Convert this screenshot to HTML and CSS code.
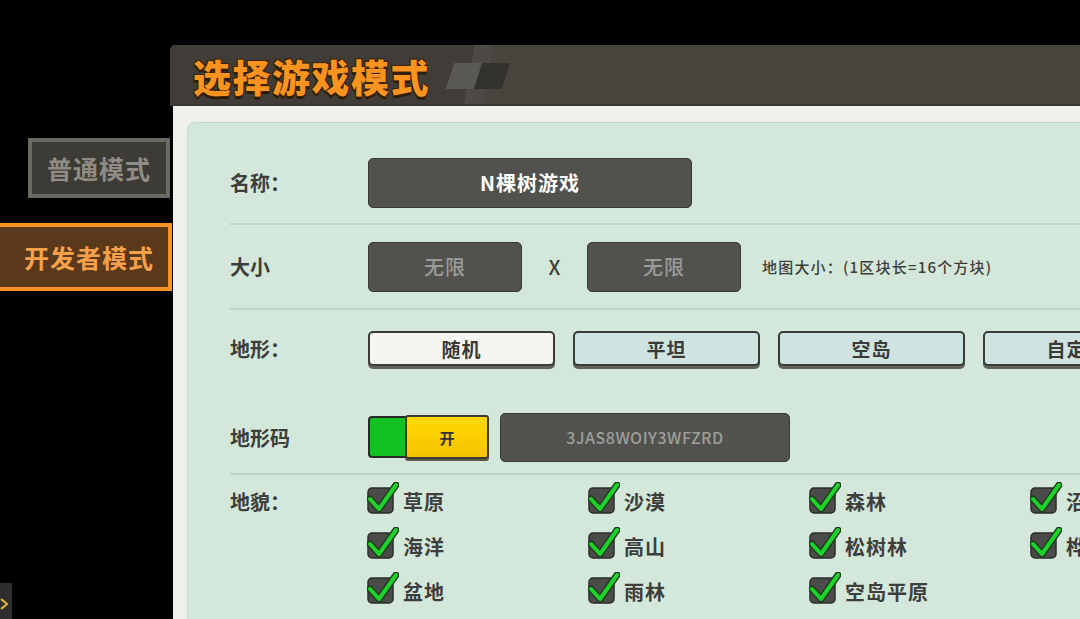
FILE: index.html
```html
<!DOCTYPE html>
<html lang="zh-CN">
<head>
<meta charset="utf-8">
<title>选择游戏模式</title>
<link rel="stylesheet" href="styles.css">
</head>
<body>
<div class="screen">
  <aside class="side">
    <div class="tab tab-normal">普通模式</div>
    <div class="tab tab-dev">开发者模式</div>
    <div class="side-more">
      <svg width="12" height="36" viewBox="0 0 12 36"><path d="M1 16 L7 21 L1 26" fill="none" stroke="#e2b82a" stroke-width="2.2" stroke-linejoin="round"/></svg>
    </div>
  </aside>
  <main class="panel">
    <header class="panel-head">
      <h1 class="title">选择游戏模式</h1>
      <span class="deco"><i class="deco-a"></i><i class="deco-b"></i></span>
    </header>
    <div class="frame">
      <div class="sheet">
        <div class="row row-name">
          <span class="label">名称：</span>
          <div class="field field-name">N棵树游戏</div>
        </div>
        <div class="row row-size">
          <span class="label">大小</span>
          <div class="field field-size">无限</div>
          <span class="times">X</span>
          <div class="field field-size">无限</div>
          <span class="note">地图大小：(1区块长=16个方块)</span>
        </div>
        <div class="row row-terrain">
          <span class="label label-btn">地形：</span>
          <div class="opt opt-on">随机</div>
          <div class="opt">平坦</div>
          <div class="opt">空岛</div>
          <div class="opt">自定义</div>
        </div>
        <div class="row row-code">
          <span class="label">地形码</span>
          <div class="toggle">
            <span class="toggle-track"></span>
            <span class="toggle-knob">开</span>
          </div>
          <div class="field field-code">3JAS8WOIY3WFZRD</div>
        </div>
        <div class="row row-biome">
          <span class="label label-check">地貌：</span>
          <div class="checks">
            <div class="check"><svg class="cb" viewBox="0 0 32 32"><rect x="1" y="6" width="25" height="25" rx="4" fill="#4b4b49" stroke="#2c2c2b" stroke-width="1.5"/><path d="M3 17 L12 27 L29 3" fill="none" stroke="#1d3d1d" stroke-width="7" stroke-linecap="round" stroke-linejoin="round"/><path d="M3 17 L12 27 L29 3" fill="none" stroke="#1fd22b" stroke-width="4" stroke-linecap="round" stroke-linejoin="round"/></svg><span>草原</span></div>
            <div class="check"><svg class="cb" viewBox="0 0 32 32"><rect x="1" y="6" width="25" height="25" rx="4" fill="#4b4b49" stroke="#2c2c2b" stroke-width="1.5"/><path d="M3 17 L12 27 L29 3" fill="none" stroke="#1d3d1d" stroke-width="7" stroke-linecap="round" stroke-linejoin="round"/><path d="M3 17 L12 27 L29 3" fill="none" stroke="#1fd22b" stroke-width="4" stroke-linecap="round" stroke-linejoin="round"/></svg><span>沙漠</span></div>
            <div class="check"><svg class="cb" viewBox="0 0 32 32"><rect x="1" y="6" width="25" height="25" rx="4" fill="#4b4b49" stroke="#2c2c2b" stroke-width="1.5"/><path d="M3 17 L12 27 L29 3" fill="none" stroke="#1d3d1d" stroke-width="7" stroke-linecap="round" stroke-linejoin="round"/><path d="M3 17 L12 27 L29 3" fill="none" stroke="#1fd22b" stroke-width="4" stroke-linecap="round" stroke-linejoin="round"/></svg><span>森林</span></div>
            <div class="check"><svg class="cb" viewBox="0 0 32 32"><rect x="1" y="6" width="25" height="25" rx="4" fill="#4b4b49" stroke="#2c2c2b" stroke-width="1.5"/><path d="M3 17 L12 27 L29 3" fill="none" stroke="#1d3d1d" stroke-width="7" stroke-linecap="round" stroke-linejoin="round"/><path d="M3 17 L12 27 L29 3" fill="none" stroke="#1fd22b" stroke-width="4" stroke-linecap="round" stroke-linejoin="round"/></svg><span>沼泽</span></div>
            <div class="check"><svg class="cb" viewBox="0 0 32 32"><rect x="1" y="6" width="25" height="25" rx="4" fill="#4b4b49" stroke="#2c2c2b" stroke-width="1.5"/><path d="M3 17 L12 27 L29 3" fill="none" stroke="#1d3d1d" stroke-width="7" stroke-linecap="round" stroke-linejoin="round"/><path d="M3 17 L12 27 L29 3" fill="none" stroke="#1fd22b" stroke-width="4" stroke-linecap="round" stroke-linejoin="round"/></svg><span>海洋</span></div>
            <div class="check"><svg class="cb" viewBox="0 0 32 32"><rect x="1" y="6" width="25" height="25" rx="4" fill="#4b4b49" stroke="#2c2c2b" stroke-width="1.5"/><path d="M3 17 L12 27 L29 3" fill="none" stroke="#1d3d1d" stroke-width="7" stroke-linecap="round" stroke-linejoin="round"/><path d="M3 17 L12 27 L29 3" fill="none" stroke="#1fd22b" stroke-width="4" stroke-linecap="round" stroke-linejoin="round"/></svg><span>高山</span></div>
            <div class="check"><svg class="cb" viewBox="0 0 32 32"><rect x="1" y="6" width="25" height="25" rx="4" fill="#4b4b49" stroke="#2c2c2b" stroke-width="1.5"/><path d="M3 17 L12 27 L29 3" fill="none" stroke="#1d3d1d" stroke-width="7" stroke-linecap="round" stroke-linejoin="round"/><path d="M3 17 L12 27 L29 3" fill="none" stroke="#1fd22b" stroke-width="4" stroke-linecap="round" stroke-linejoin="round"/></svg><span>松树林</span></div>
            <div class="check"><svg class="cb" viewBox="0 0 32 32"><rect x="1" y="6" width="25" height="25" rx="4" fill="#4b4b49" stroke="#2c2c2b" stroke-width="1.5"/><path d="M3 17 L12 27 L29 3" fill="none" stroke="#1d3d1d" stroke-width="7" stroke-linecap="round" stroke-linejoin="round"/><path d="M3 17 L12 27 L29 3" fill="none" stroke="#1fd22b" stroke-width="4" stroke-linecap="round" stroke-linejoin="round"/></svg><span>桦树林</span></div>
            <div class="check"><svg class="cb" viewBox="0 0 32 32"><rect x="1" y="6" width="25" height="25" rx="4" fill="#4b4b49" stroke="#2c2c2b" stroke-width="1.5"/><path d="M3 17 L12 27 L29 3" fill="none" stroke="#1d3d1d" stroke-width="7" stroke-linecap="round" stroke-linejoin="round"/><path d="M3 17 L12 27 L29 3" fill="none" stroke="#1fd22b" stroke-width="4" stroke-linecap="round" stroke-linejoin="round"/></svg><span>盆地</span></div>
            <div class="check"><svg class="cb" viewBox="0 0 32 32"><rect x="1" y="6" width="25" height="25" rx="4" fill="#4b4b49" stroke="#2c2c2b" stroke-width="1.5"/><path d="M3 17 L12 27 L29 3" fill="none" stroke="#1d3d1d" stroke-width="7" stroke-linecap="round" stroke-linejoin="round"/><path d="M3 17 L12 27 L29 3" fill="none" stroke="#1fd22b" stroke-width="4" stroke-linecap="round" stroke-linejoin="round"/></svg><span>雨林</span></div>
            <div class="check"><svg class="cb" viewBox="0 0 32 32"><rect x="1" y="6" width="25" height="25" rx="4" fill="#4b4b49" stroke="#2c2c2b" stroke-width="1.5"/><path d="M3 17 L12 27 L29 3" fill="none" stroke="#1d3d1d" stroke-width="7" stroke-linecap="round" stroke-linejoin="round"/><path d="M3 17 L12 27 L29 3" fill="none" stroke="#1fd22b" stroke-width="4" stroke-linecap="round" stroke-linejoin="round"/></svg><span>空岛平原</span></div>
          </div>
        </div>
      </div>
    </div>
  </main>
</div>
</body>
</html>
```
FILE: styles.css
```css
html, body {
  margin: 0;
  padding: 0;
  background: #000;
}
body {
  width: 1080px;
  height: 619px;
  overflow: hidden;
  font-family: "Noto Sans CJK SC", "Noto Sans", sans-serif;
  color: #3c3c3a;
}
.screen {
  display: flex;
  height: 619px;
}

/* left tabs */
.side {
  width: 170px;
  flex: none;
  display: flex;
  flex-direction: column;
  align-items: flex-start;
  padding-top: 138px;
  box-sizing: border-box;
}
.tab {
  box-sizing: border-box;
  display: flex;
  align-items: center;
  justify-content: center;
  font-weight: 700;
  font-size: 25px;
  letter-spacing: 1px;
  flex: none;
}
.tab-normal {
  margin-left: 28px;
  width: 142px;
  height: 60px;
  border: 4px solid #6b6a61;
  background: #3d3b36;
  color: #8e8c83;
}
.tab-dev {
  margin-top: 25px;
  width: 172px;
  height: 68px;
  border: 4px solid #f7931e;
  border-left: none;
  background: #5a391b;
  color: #f6a04b;
  padding-left: 10px;
}
.side-more {
  margin-top: auto;
  width: 12px;
  height: 36px;
  background: #2e2e2e;
}
.side-more svg { display: block; }

/* panel */
.panel {
  flex: 1;
  min-width: 0;
  display: flex;
  flex-direction: column;
  margin-top: 45px;
  overflow: hidden;
}
.panel-head {
  height: 61px;
  flex: none;
  display: flex;
  align-items: center;
  padding-left: 23px;
  background: linear-gradient(100deg, #403d39 0, #403d39 300px, #4d4a45 300px, #4d4a45 318px, #48453f 318px);
  border-top-left-radius: 5px;
  box-shadow: inset 0 -2px 0 #3a3834;
}
.title {
  margin: 0;
  font-size: 38px;
  font-weight: 900;
  line-height: 1;
  letter-spacing: 1.5px;
  color: #f8931f;
  text-shadow: -1px -1px 0 #3a2408, 1px -1px 0 #3a2408, -1px 1px 0 #3a2408, 1px 1px 0 #3a2408, 0 3px 0 #2a1a06;
}
.deco {
  display: flex;
  margin-left: 20px;
  transform: skewX(-18deg);
}
.deco i {
  display: block;
  width: 28px;
  height: 26px;
}
.deco-a { background: #5a5853; }
.deco-b { background: #34322e; }

.frame {
  flex: 1;
  display: flex;
  margin-left: 3px;
  padding: 16px 0 0 14px;
  background: #eef0ec;
}
.sheet {
  flex: 1;
  min-width: 0;
  background: #d3e8da;
  border-top: 1px solid #c2dccb;
  border-left: 1px solid #c2dccb;
  border-top-left-radius: 8px;
  padding: 19px 0 0 42px;
}

/* rows */
.row {
  display: flex;
  align-items: center;
  box-sizing: border-box;
  border-bottom: 2px solid #b9d8c6;
}
.label {
  width: 138px;
  flex: none;
  font-size: 20px;
  font-weight: 700;
  color: #3e3e3c;
}
.row-name { height: 83px; }
.row-size { height: 85px; }
.row-terrain {
  height: 91px;
  align-items: flex-start;
  padding-top: 21px;
  border-bottom: none;
}
.label-btn { line-height: 35px; }
.row-code { height: 74px; }
.row-biome {
  align-items: flex-start;
  padding-top: 4px;
  border-bottom: none;
}
.label-check { line-height: 45px; }

.field {
  box-sizing: border-box;
  flex: none;
  display: flex;
  align-items: center;
  justify-content: center;
  background: #51514e;
  border: 1px solid #3a3a38;
  border-radius: 5px;
}
.field-name {
  width: 324px;
  height: 50px;
  color: #fff;
  font-size: 20px;
  font-weight: 700;
  letter-spacing: 1px;
}
.field-size {
  width: 154px;
  height: 50px;
  color: #9b9b97;
  font-size: 20px;
  font-weight: 500;
  letter-spacing: 1px;
}
.times {
  width: 65px;
  flex: none;
  text-align: center;
  font-size: 20px;
  font-weight: 500;
  color: #3e3e3c;
}
.note {
  margin-left: 21px;
  flex: none;
  font-size: 15px;
  font-weight: 500;
  letter-spacing: 1.2px;
  color: #3e3e3c;
}

.opt {
  box-sizing: border-box;
  flex: none;
  width: 187px;
  height: 35px;
  margin-right: 18px;
  display: flex;
  align-items: center;
  justify-content: center;
  background: #cfe4e0;
  border: 2px solid #3a3a38;
  border-radius: 5px;
  box-shadow: 0 3px 0 #62625e;
  font-size: 19px;
  font-weight: 700;
  letter-spacing: 1px;
  color: #3a3a38;
}
.opt-on { background: #f5f5f1; }

.toggle {
  display: flex;
  align-items: center;
  flex: none;
}
.toggle-track {
  box-sizing: border-box;
  width: 40px;
  height: 42px;
  background: #12c224;
  border: 2px solid #2b2b2b;
  border-right: none;
  border-radius: 4px 0 0 4px;
}
.toggle-knob {
  box-sizing: border-box;
  width: 84px;
  height: 44px;
  margin-left: -3px;
  display: flex;
  align-items: center;
  justify-content: center;
  background: linear-gradient(#ffd900, #f6c300);
  border: 2px solid #3a3a30;
  border-radius: 3px;
  box-shadow: 0 2px 0 #5d5a48;
  font-size: 15px;
  font-weight: 700;
  color: #333;
}
.field-code {
  width: 290px;
  height: 49px;
  margin-left: 11px;
  color: #9e9e9a;
  font-size: 16px;
  font-weight: 500;
  letter-spacing: 0.5px;
}

.checks {
  display: grid;
  grid-template-columns: repeat(4, 221px);
  grid-auto-rows: 45px;
  flex: none;
}
.check {
  display: flex;
  align-items: center;
  margin-left: -1px;
}
.cb {
  width: 32px;
  height: 32px;
  flex: none;
  margin-top: -8px;
}
.check span {
  margin-left: 4px;
  font-size: 20px;
  font-weight: 700;
  letter-spacing: 1px;
  color: #3e3e3c;
  white-space: nowrap;
}
```
